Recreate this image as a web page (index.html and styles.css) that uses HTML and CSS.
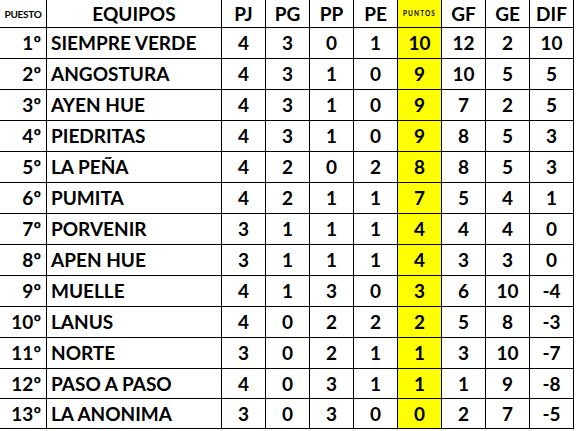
FILE: index.html
```html
<!DOCTYPE html>
<html lang="es">
<head>
<meta charset="utf-8">
<title>Tabla de posiciones</title>
<link rel="stylesheet" href="styles.css">
</head>
<body>
<table class="standings">
  <colgroup>
    <col class="c-pos">
    <col class="c-team">
    <col class="c-num"><col class="c-num"><col class="c-num"><col class="c-num">
    <col class="c-num"><col class="c-num"><col class="c-num"><col class="c-num">
  </colgroup>
  <thead>
    <tr class="head">
      <th class="pos-head">PUESTO</th>
      <th>EQUIPOS</th>
      <th>PJ</th><th>PG</th><th>PP</th><th>PE</th>
      <th class="pts pts-head">PUNTOS</th>
      <th>GF</th><th>GE</th><th>DIF</th>
    </tr>
  </thead>
  <tbody>
    <tr><td class="pos">1º</td><td class="team">SIEMPRE VERDE</td><td>4</td><td>3</td><td>0</td><td>1</td><td class="pts">10</td><td>12</td><td>2</td><td>10</td></tr>
    <tr><td class="pos">2º</td><td class="team">ANGOSTURA</td><td>4</td><td>3</td><td>1</td><td>0</td><td class="pts">9</td><td>10</td><td>5</td><td>5</td></tr>
    <tr><td class="pos">3º</td><td class="team">AYEN HUE</td><td>4</td><td>3</td><td>1</td><td>0</td><td class="pts">9</td><td>7</td><td>2</td><td>5</td></tr>
    <tr><td class="pos">4º</td><td class="team">PIEDRITAS</td><td>4</td><td>3</td><td>1</td><td>0</td><td class="pts">9</td><td>8</td><td>5</td><td>3</td></tr>
    <tr><td class="pos">5º</td><td class="team">LA PEÑA</td><td>4</td><td>2</td><td>0</td><td>2</td><td class="pts">8</td><td>8</td><td>5</td><td>3</td></tr>
    <tr><td class="pos">6º</td><td class="team">PUMITA</td><td>4</td><td>2</td><td>1</td><td>1</td><td class="pts">7</td><td>5</td><td>4</td><td>1</td></tr>
    <tr><td class="pos">7º</td><td class="team">PORVENIR</td><td>3</td><td>1</td><td>1</td><td>1</td><td class="pts">4</td><td>4</td><td>4</td><td>0</td></tr>
    <tr><td class="pos">8º</td><td class="team">APEN HUE</td><td>3</td><td>1</td><td>1</td><td>1</td><td class="pts">4</td><td>3</td><td>3</td><td>0</td></tr>
    <tr><td class="pos">9º</td><td class="team">MUELLE</td><td>4</td><td>1</td><td>3</td><td>0</td><td class="pts">3</td><td>6</td><td>10</td><td>-4</td></tr>
    <tr><td class="pos">10º</td><td class="team">LANUS</td><td>4</td><td>0</td><td>2</td><td>2</td><td class="pts">2</td><td>5</td><td>8</td><td>-3</td></tr>
    <tr><td class="pos">11º</td><td class="team">NORTE</td><td>3</td><td>0</td><td>2</td><td>1</td><td class="pts">1</td><td>3</td><td>10</td><td>-7</td></tr>
    <tr class="short"><td class="pos">12º</td><td class="team">PASO A PASO</td><td>4</td><td>0</td><td>3</td><td>1</td><td class="pts">1</td><td>1</td><td>9</td><td>-8</td></tr>
    <tr class="short"><td class="pos">13º</td><td class="team">LA ANONIMA</td><td>3</td><td>0</td><td>3</td><td>0</td><td class="pts">0</td><td>2</td><td>7</td><td>-5</td></tr>
  </tbody>
</table>
<div class="sheet-tail">
  <span class="tail-pos"></span><span class="tail-team"></span>
  <span class="tail-num"></span><span class="tail-num"></span><span class="tail-num"></span><span class="tail-num"></span>
  <span class="tail-num"></span><span class="tail-num"></span><span class="tail-num"></span><span class="tail-num"></span>
</div>
</body>
</html>
```

FILE: styles.css
```css
html, body {
  margin: 0;
  padding: 0;
  background: #ffffff;
}

body {
  overflow: hidden;
  font-family: "Lato", "Liberation Sans", sans-serif;
  color: #000000;
}

.standings {
  table-layout: fixed;
  width: 575px;
  margin: -1px 0 0 -1px;
  border-collapse: separate;
  border-spacing: 1px;
  background: #000000;
}

.c-pos { width: 46px; }
.c-team { width: 174px; }
.c-num { width: 43px; }

.standings th,
.standings td {
  padding: 0;
  background: #ffffff;
  font-weight: 700;
  font-size: 19px;
  line-height: 20px;
  text-align: center;
  vertical-align: middle;
  white-space: nowrap;
  overflow: hidden;
}

.head th {
  height: 27px;
}

.standings td {
  height: 30px;
}

.standings .short td {
  height: 29px;
}

.standings .pos-head {
  font-size: 10px;
  text-align: center;
  letter-spacing: -0.3px;
}

.standings .pts {
  background: #ffff00;
}

.standings .pts-head {
  font-size: 6.5px;
  letter-spacing: 1.1px;
  line-height: 8px;
}

.standings .pos {
  text-align: right;
  padding-right: 5px;
}

.standings .team {
  text-align: left;
  padding-left: 4px;
}

.sheet-tail {
  display: flex;
  height: 3px;
}

.sheet-tail span {
  display: block;
  flex: none;
  height: 3px;
  border-right: 1px solid #d4d4d4;
}

.tail-pos { width: 46px; }
.tail-team { width: 174px; }
.tail-num { width: 43px; }
```
